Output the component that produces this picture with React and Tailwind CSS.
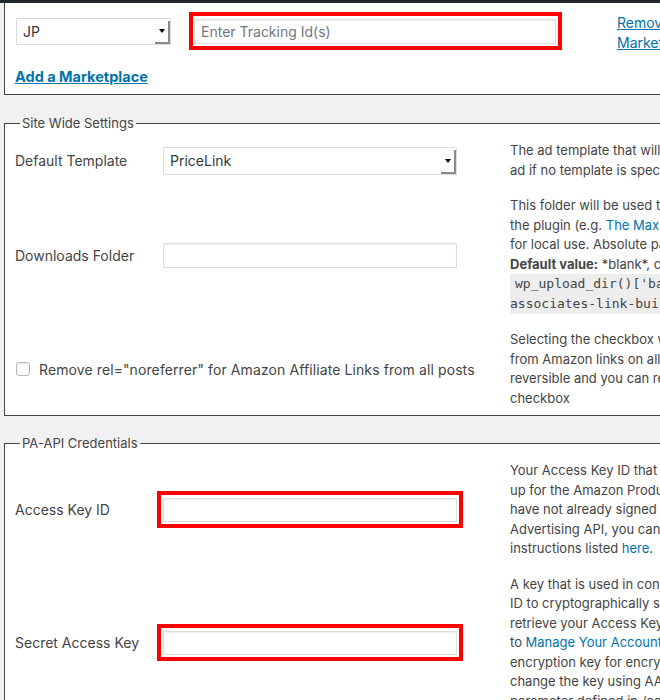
const FakeSelect = ({ value, className }) => (
  <div className={`flex items-stretch bg-white border border-[#ddd] ${className}`}>
    <span className="flex-1 flex items-center pl-[6px] text-[14px] text-[#32373c]">{value}</span>
    <span className="w-[15px] mt-[2px] flex items-center justify-center border-r-[2px] border-b-[2px] border-[#8a8a8a]">
      <span className="w-0 h-0 border-x-[3px] border-x-transparent border-t-[4px] border-t-black" />
    </span>
  </div>
);

const TextBox = ({ placeholder, className }) => (
  <div className={`bg-white border border-[#ddd] shadow-[inset_0_1px_2px_rgba(0,0,0,0.07)] flex items-center pl-[6px] text-[14px] text-[#72777c] ${className}`}>
    {placeholder}
  </div>
);

const Flagged = ({ children, className }) => (
  <div className={`border-4 border-[#ff0000] pt-[3px] pb-[2px] pr-[2px] ${className}`}>{children}</div>
);

const Desc = ({ lines }) => (
  <div className="text-[13px] leading-[19.5px] text-[#444] whitespace-nowrap">
    {lines.map((l, i) => (
      <div key={i}>{l}</div>
    ))}
  </div>
);

const Label = ({ children }) => <div className="text-[14px] text-[#444]">{children}</div>;

const Link = ({ children }) => <span className="text-[#0073aa]">{children}</span>;

const Code = ({ children, first }) => (
  <div className="h-[20px] flex items-center">
    <span className={`bg-[rgba(0,0,0,0.07)] font-['DejaVu_Sans_Mono',monospace] text-[13px] leading-[20px] ${first ? 'pl-[5px]' : ''}`}>
      {children}
    </span>
  </div>
);

export default function App() {
  return (
    <div className="w-[660px] h-[700px] overflow-hidden bg-[#f1f1f1] font-[Inter,'Noto_Sans',sans-serif]">
      <div className="h-[3px] bg-[#23282d]" />
      <div className="w-[1000px] pl-[4px]">
        {/* marketplace box */}
        <div className="bg-white border-l border-b border-[#444] pt-[9px] pb-[7px]">
          <div className="flex items-center h-[38px] pl-[11px]">
            <FakeSelect value="JP" className="w-[155px] h-[27px]" />
            <Flagged className="ml-[18px] pl-[1px]">
              <TextBox placeholder="Enter Tracking Id(s)" className="w-[362px] h-[25px]" />
            </Flagged>
            <div className="self-start mt-[1px] ml-[55px] w-[90px] text-[14px] leading-[19.6px] text-[#0073aa] underline">
              Remove Marketplace
            </div>
          </div>
          <div className="mt-[17px] pl-[10px] h-[20px] text-[14.5px] leading-[20px] font-bold text-[#0073aa] underline">
            Add a Marketplace
          </div>
        </div>

        {/* site wide */}
        <fieldset className="mt-[18px] bg-white border border-[#444] pb-[7px]">
          <legend className="ml-[15px] px-[2px] text-[13px] leading-[20px] text-[#444]">Site Wide Settings</legend>
          <div className="pt-[8px] pl-[10px] grid grid-cols-[148px_347px_1fr] gap-y-[16px] items-center">
            <Label>Default Template</Label>
            <FakeSelect value="PriceLink" className="w-[294px] h-[28px]" />
            <Desc
              lines={[
                'The ad template that will be used to display the',
                'ad if no template is specified.',
              ]}
            />

            <Label>Downloads Folder</Label>
            <TextBox className="w-[294px] h-[25px]" />
            <div className="text-[13px] leading-[19.5px] text-[#444] whitespace-nowrap">
              <div>This folder will be used to store the files created by</div>
              <div>
                the plugin (e.g. <Link>The MaxMind GeoLite2 Country database</Link>)
              </div>
              <div>for local use. Absolute path of the folder.</div>
              <div>
                <b>Default value:</b> *blank*, corresponds to
              </div>
              <Code first>wp_upload_dir()['basedir'] . '/amazon-</Code>
              <Code>associates-link-builder/'</Code>
            </div>

            <div className="col-span-2 flex items-center pl-[1px]">
              <span className="w-[14px] h-[14px] bg-white border border-[#b4b9be] rounded-[3px] shadow-[inset_0_1px_2px_rgba(0,0,0,0.1)]" />
              <span className="ml-[9px] text-[14px] text-[#444] whitespace-nowrap tracking-[0.1px]">
                Remove rel="noreferrer" for Amazon Affiliate Links from all posts
              </span>
            </div>
            <Desc
              lines={[
                'Selecting the checkbox will remove rel="noreferrer"',
                'from Amazon links on all posts. This action is',
                'reversible and you can re-add by unchecking the',
                'checkbox',
              ]}
            />
          </div>
        </fieldset>

        {/* pa-api */}
        <fieldset className="mt-[17px] bg-white border border-[#444] pb-[7px]">
          <legend className="ml-[15px] px-[2px] text-[13px] leading-[20px] text-[#444]">PA-API Credentials</legend>
          <div className="pt-[8px] pl-[10px] grid grid-cols-[148px_347px_1fr] gap-y-[16px] items-center">
            <Label>Access Key ID</Label>
            <Flagged className="-ml-[6px] pl-[2px] w-fit">
              <TextBox className="w-[294px] h-[24px]" />
            </Flagged>
            <div className="text-[13px] leading-[19.5px] text-[#444] whitespace-nowrap">
              <div>Your Access Key ID that you generated after signing</div>
              <div>up for the Amazon Product Advertising API. If you</div>
              <div>have not already signed up for the Amazon Product</div>
              <div>Advertising API, you can do so by following the</div>
              <div>
                instructions listed <Link>here</Link>.
              </div>
            </div>

            <Label>Secret Access Key</Label>
            <Flagged className="-ml-[6px] pl-[2px] w-fit">
              <TextBox className="w-[294px] h-[24px]" />
            </Flagged>
            <div className="text-[13px] leading-[19.5px] text-[#444] whitespace-nowrap">
              <div>A key that is used in conjunction with the Access Key</div>
              <div>ID to cryptographically sign an API request. To</div>
              <div>retrieve your Access Key ID or Secret Access Key, go</div>
              <div>
                to <Link>Manage Your Account</Link>. The plugin uses a default
              </div>
              <div>encryption key for encrypting the Secret Key. You can</div>
              <div>change the key using AALB_ENCRYPTION_KEY</div>
              <div>parameter defined in /config.php</div>
            </div>
          </div>
        </fieldset>
      </div>
    </div>
  );
}
